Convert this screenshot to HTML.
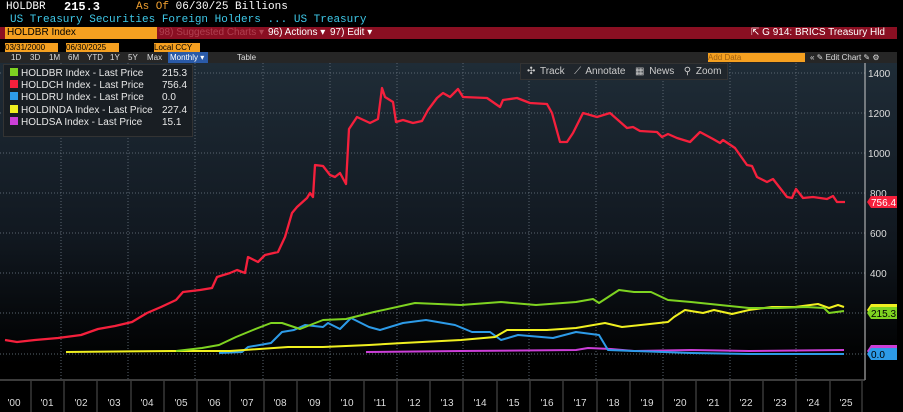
<!DOCTYPE html>
<html><head><meta charset="utf-8"><style>
*{margin:0;padding:0;box-sizing:border-box}
body{width:903px;height:412px;background:#000;overflow:hidden;font-family:"Liberation Sans",sans-serif;position:relative;color:#ddd}
.abs{position:absolute;white-space:nowrap}
.mono{font-family:"Liberation Mono",monospace}
</style></head><body>
<div class="abs mono" style="left:6px;top:1px;font-size:11px;color:#fff">HOLDBR</div>
<div class="abs mono" style="left:64px;top:0px;font-size:12px;color:#fff;font-weight:bold">215.3</div>
<div class="abs mono" style="left:136px;top:1px;font-size:11px"><span style="color:#f0a030">As Of</span> <span style="color:#fff">06/30/25 Billions</span></div>
<div class="abs mono" style="left:10px;top:14px;font-size:11px;color:#3ec8e8">US Treasury Securities Foreign Holders ... US Treasury</div>
<div class="abs" style="left:0;top:27px;width:897px;height:12px;background:#8a0f22"></div>
<div class="abs" style="left:5px;top:27px;width:152px;height:12px;background:#f5a020;color:#000;font-size:10px;line-height:12px;padding-left:2px">HOLDBR Index</div>
<div class="abs" style="left:159px;top:27px;font-size:10px;line-height:12px;color:#b04050">98) Suggested Charts ▾</div>
<div class="abs" style="left:268px;top:27px;font-size:10px;line-height:12px;color:#fff">96) Actions ▾</div>
<div class="abs" style="left:330px;top:27px;font-size:10px;line-height:12px;color:#fff">97) Edit ▾</div>
<div class="abs" style="left:751px;top:27px;font-size:10px;line-height:12px;color:#fff">⇱ G 914: BRICS Treasury Hld</div>
<div class="abs" style="left:5px;top:43px;width:53px;height:9px;background:#f5a020;color:#000;font-size:8px;line-height:9px">03/31/2000</div>
<div class="abs" style="left:66px;top:43px;width:53px;height:9px;background:#f5a020;color:#000;font-size:8px;line-height:9px">06/30/2025</div>
<div class="abs" style="left:154px;top:43px;width:46px;height:9px;background:#f5a020;color:#000;font-size:8px;line-height:9px">Local CCY</div>
<div class="abs" style="left:0;top:52px;width:897px;height:11px;background:#262626"></div>
<div class="abs" style="top:52px;font-size:8px;line-height:11px;color:#ddd;left:0;width:170px">
<span class="abs" style="left:11px">1D</span><span class="abs" style="left:30px">3D</span><span class="abs" style="left:49px">1M</span><span class="abs" style="left:68px">6M</span><span class="abs" style="left:87px">YTD</span><span class="abs" style="left:110px">1Y</span><span class="abs" style="left:128px">5Y</span><span class="abs" style="left:147px">Max</span></div>
<div class="abs" style="left:168px;top:52px;width:40px;height:11px;background:#2a5aa8;font-size:8px;line-height:11px;color:#fff;padding-left:2px">Monthly ▾</div>
<div class="abs" style="left:237px;top:52px;font-size:8px;line-height:11px;color:#ddd">Table</div>
<div class="abs" style="left:708px;top:53px;width:97px;height:9px;background:#f5a020;color:#a06010;font-size:8px;line-height:9px">Add Data</div>
<div class="abs" style="left:810px;top:52px;font-size:8px;line-height:11px;color:#ddd">« ✎ Edit Chart ✎ ⚙</div>
<svg class="abs" style="left:0;top:63px" width="903" height="349">
<defs><linearGradient id="g" x1="0" y1="0" x2="0" y2="1"><stop offset="0" stop-color="#1f2c37"/><stop offset="0.55" stop-color="#111820"/><stop offset="0.95" stop-color="#000"/></linearGradient></defs>
<rect x="0" y="0" width="897" height="317" fill="url(#g)"/>
<g stroke="#5a6570" stroke-dasharray="1,2" stroke-width="1">
<line x1="0" x2="865" y1="10" y2="10"/><line x1="0" x2="865" y1="50" y2="50"/><line x1="0" x2="865" y1="90" y2="90"/><line x1="0" x2="865" y1="130" y2="130"/><line x1="0" x2="865" y1="170" y2="170"/><line x1="0" x2="865" y1="210" y2="210"/><line x1="0" x2="865" y1="250" y2="250"/><line x1="0" x2="865" y1="291" y2="291"/>
<line x1="61" x2="61" y1="0" y2="317"/><line x1="128" x2="128" y1="0" y2="317"/><line x1="195" x2="195" y1="0" y2="317"/><line x1="263" x2="263" y1="0" y2="317"/><line x1="330" x2="330" y1="0" y2="317"/><line x1="397" x2="397" y1="0" y2="317"/><line x1="463" x2="463" y1="0" y2="317"/><line x1="529" x2="529" y1="0" y2="317"/><line x1="596" x2="596" y1="0" y2="317"/><line x1="663" x2="663" y1="0" y2="317"/><line x1="730" x2="730" y1="0" y2="317"/><line x1="796" x2="796" y1="0" y2="317"/>
</g>
<line x1="865" x2="865" y1="0" y2="317" stroke="#ccc"/>
<g fill="#ddd" font-size="10"><text x="868" y="14">1400</text><text x="868" y="54">1200</text><text x="868" y="94">1000</text><text x="870" y="134">800</text><text x="870" y="174">600</text><text x="870" y="214">400</text></g>
<g transform="translate(0,-63)" fill="none" stroke-width="2" stroke-linejoin="round">
<polyline stroke="#cc3fd8" points="366,352 461,351 576,350 588,348 611,349 634,351 691,350 749,351 844,350"/>
<polyline stroke="#2d9be8" points="219,353 242,352 248,347 271,343 282,332 294,330 305,325 323,327 328,323 340,329 351,318 369,327 380,330 403,323 426,320 455,325 472,332 490,332 501,340 518,335 553,338 576,332 599,335 608,350 634,351 691,353 749,354 844,354"/>
<polyline stroke="#f0f020" points="66,352 173,351 230,351 288,347 323,347 369,345 403,343 461,340 495,337 507,330 547,330 576,328 605,323 622,327 668,322 674,317 685,310 703,313 714,310 732,314 749,310 772,307 795,307 818,304 829,308 838,305 844,307"/>
<polyline stroke="#7ed321" points="176,351 202,348 219,345 236,337 253,330 271,323 282,323 300,329 323,320 346,319 374,312 415,303 461,305 501,302 536,305 576,302 593,299 599,303 619,290 634,292 651,292 668,300 691,302 720,305 749,308 778,308 806,307 824,308 829,313 844,311"/>
<polyline stroke="#f5203c" stroke-width="2.3" points="5,340 17,342 35,340 58,338 81,335 98,329 115,326 132,322 147,313 161,307 176,300 183,292 200,290 212,288 217,277 230,273 237,270 245,273 248,257 258,262 265,255 278,252 285,237 292,213 297,207 307,198 310,193 313,197 315,165 323,166 330,175 335,177 340,173 346,184 349,129 357,117 370,123 378,119 382,88 385,97 393,102 396,122 403,120 413,123 422,121 428,110 437,98 443,93 450,97 458,89 463,97 487,98 500,107 503,100 517,98 530,103 547,104 552,113 560,142 567,142 573,133 583,113 597,117 610,113 627,128 633,127 640,131 657,132 662,137 668,134 677,138 690,142 700,132 713,139 720,143 723,140 735,148 747,165 752,166 757,177 767,182 773,179 787,197 792,198 796,189 803,198 813,197 827,199 833,196 837,202 845,202"/>
</g>
<path d="M867 139 l4 -6 h26 v12 h-26z" fill="#f5203c"/><text x="871" y="143" fill="#fff" font-size="10">756.4</text>
<path d="M867 247 l4 -6 h26 v12 h-26z" fill="#f0f020"/>
<path d="M867 250 l4 -6 h26 v12 h-26z" fill="#7ed321"/><text x="871" y="254" fill="#000" font-size="10">215.3</text>
<path d="M867 288 l4 -6 h26 v12 h-26z" fill="#cc3fd8"/>
<path d="M867 291 l4 -6 h26 v12 h-26z" fill="#2d9be8"/><text x="871" y="295" fill="#000" font-size="10">0.0</text>
<line x1="0" x2="865" y1="317" y2="317" stroke="#777"/>
<g stroke="#555">
<line x1="31" x2="31" y1="318" y2="349"/><line x1="64" x2="64" y1="318" y2="349"/><line x1="97" x2="97" y1="318" y2="349"/><line x1="131" x2="131" y1="318" y2="349"/><line x1="164" x2="164" y1="318" y2="349"/><line x1="197" x2="197" y1="318" y2="349"/><line x1="230" x2="230" y1="318" y2="349"/><line x1="264" x2="264" y1="318" y2="349"/><line x1="297" x2="297" y1="318" y2="349"/><line x1="330" x2="330" y1="318" y2="349"/><line x1="364" x2="364" y1="318" y2="349"/><line x1="397" x2="397" y1="318" y2="349"/><line x1="430" x2="430" y1="318" y2="349"/><line x1="463" x2="463" y1="318" y2="349"/><line x1="497" x2="497" y1="318" y2="349"/><line x1="530" x2="530" y1="318" y2="349"/><line x1="563" x2="563" y1="318" y2="349"/><line x1="597" x2="597" y1="318" y2="349"/><line x1="630" x2="630" y1="318" y2="349"/><line x1="663" x2="663" y1="318" y2="349"/><line x1="696" x2="696" y1="318" y2="349"/><line x1="730" x2="730" y1="318" y2="349"/><line x1="763" x2="763" y1="318" y2="349"/><line x1="796" x2="796" y1="318" y2="349"/><line x1="830" x2="830" y1="318" y2="349"/><line x1="862" x2="862" y1="318" y2="349"/>
</g>
<g fill="#ddd" font-size="10" text-anchor="middle">
<text x="14" y="343">'00</text><text x="47" y="343">'01</text><text x="81" y="343">'02</text><text x="114" y="343">'03</text><text x="147" y="343">'04</text><text x="181" y="343">'05</text><text x="214" y="343">'06</text><text x="247" y="343">'07</text><text x="280" y="343">'08</text><text x="314" y="343">'09</text><text x="347" y="343">'10</text><text x="380" y="343">'11</text><text x="414" y="343">'12</text><text x="447" y="343">'13</text><text x="480" y="343">'14</text><text x="513" y="343">'15</text><text x="547" y="343">'16</text><text x="580" y="343">'17</text><text x="613" y="343">'18</text><text x="647" y="343">'19</text><text x="680" y="343">'20</text><text x="713" y="343">'21</text><text x="746" y="343">'22</text><text x="780" y="343">'23</text><text x="813" y="343">'24</text><text x="846" y="343">'25</text>
</g>
</svg>
<div class="abs" style="left:3px;top:64px;width:190px;height:73px;background:#191e23;border:1px solid #333"></div>
<div class="abs" style="left:10px;top:68px;font-size:10px;line-height:12.2px;color:#e8e8e8">
<div><span style="display:inline-block;width:8px;height:8px;background:#7ed321;margin-right:3px"></span>HOLDBR Index - Last Price <span style="position:absolute;left:152px">215.3</span></div>
<div><span style="display:inline-block;width:8px;height:8px;background:#f5203c;margin-right:3px"></span>HOLDCH Index - Last Price <span style="position:absolute;left:152px">756.4</span></div>
<div><span style="display:inline-block;width:8px;height:8px;background:#2d9be8;margin-right:3px"></span>HOLDRU Index - Last Price <span style="position:absolute;left:152px">0.0</span></div>
<div><span style="display:inline-block;width:8px;height:8px;background:#f0f020;margin-right:3px"></span>HOLDINDA Index - Last Price <span style="position:absolute;left:152px">227.4</span></div>
<div><span style="display:inline-block;width:8px;height:8px;background:#cc3fd8;margin-right:3px"></span>HOLDSA Index - Last Price <span style="position:absolute;left:152px">15.1</span></div>
</div>
<div class="abs" style="left:520px;top:63px;width:208px;height:17px;background:#20262c;border:1px solid #333;font-size:10px;line-height:16px;color:#ccc;padding-left:6px;word-spacing:2px">✣ Track &nbsp;⟋ Annotate &nbsp;▦ News &nbsp;⚲ Zoom</div>
</body></html>
